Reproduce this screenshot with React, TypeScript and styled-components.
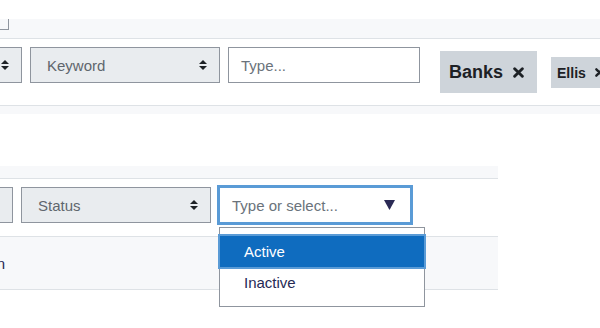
import styled, { createGlobalStyle } from 'styled-components';

const GlobalStyle = createGlobalStyle`
  body {
    margin: 0;
    background: #ffffff;
    font-family: 'Liberation Sans', Arial, sans-serif;
    overflow: hidden;
  }
`;

const Viewport = styled.div`
  width: 600px;
  height: 328px;
  overflow: hidden;
`;

// the page is scrolled sideways, so it starts left of the window
const Page = styled.div`
  margin-left: -120px;
  width: 720px;
  padding-top: 19px;
`;

const Panel = styled.section<{ $width: number }>`
  width: ${(p) => p.$width}px;
`;

const PanelHead = styled.div<{ $height: number }>`
  height: ${(p) => p.$height}px;
  background: #f7f8fa;
  border-bottom: 1px solid #dee2e6;
  position: relative;
`;

const CornerBox = styled.div`
  width: 128px;
  height: 10px;
  border-right: 1px solid #8f959e;
  border-bottom: 1px solid #8f959e;
`;

const FilterRow = styled.div<{ $height: number; $indent: number }>`
  display: flex;
  align-items: flex-start;
  gap: 8px;
  height: ${(p) => p.$height}px;
  padding: 8px 0 0 ${(p) => p.$indent}px;
  border-bottom: 1px solid #dee2e6;
`;

const Band = styled.div`
  height: 8px;
  background: #f7f8fa;
`;

const Gap = styled.div`
  height: 52px;
`;

const Select = styled.div<{ $width: number }>`
  box-sizing: border-box;
  width: ${(p) => p.$width}px;
  height: 36px;
  flex-shrink: 0;
  display: flex;
  align-items: center;
  justify-content: space-between;
  padding: 0 12px 0 16px;
  background: #e9ecef;
  border: 1px solid #8f959e;
  color: #5f666d;
  font-size: 15px;
`;

const TextInput = styled.div`
  box-sizing: border-box;
  width: 192px;
  height: 36px;
  flex-shrink: 0;
  display: flex;
  align-items: center;
  padding-left: 12px;
  border: 1px solid #8f959e;
  color: #6a737b;
  font-size: 15px;
`;

const TagList = styled.div`
  display: flex;
  align-items: flex-start;
  gap: 14px;
  margin-left: 12px;
`;

const Tag = styled.div<{ $big?: boolean }>`
  display: flex;
  align-items: center;
  flex-shrink: 0;
  gap: ${(p) => (p.$big ? 10 : 9)}px;
  height: ${(p) => (p.$big ? 42 : 31)}px;
  margin-top: ${(p) => (p.$big ? 4 : 10)}px;
  padding: ${(p) => (p.$big ? '0 13px 0 9px' : '0 8px 0 6px')};
  background: #ced4da;
  color: #1d2125;
  font-weight: 700;
  font-size: ${(p) => (p.$big ? 18 : 14)}px;
`;

const ComboWrap = styled.div`
  position: relative;
  flex-shrink: 0;
`;

const Combo = styled.div`
  box-sizing: border-box;
  width: 192px;
  height: 36px;
  display: flex;
  align-items: center;
  justify-content: space-between;
  padding: 0 15px 0 12px;
  background: #ffffff;
  border: 1px solid #5a9bd6;
  box-shadow: 0 0 0 2px #5a9bd6;
  color: #6a737b;
  font-size: 15px;
`;

const Listbox = styled.ul`
  position: absolute;
  top: 40px;
  left: 0;
  z-index: 2;
  box-sizing: border-box;
  width: 206px;
  margin: 0;
  padding: 8px 0;
  list-style: none;
  background: #ffffff;
  border: 1px solid #8f959e;
`;

const Option = styled.li<{ $active?: boolean }>`
  position: relative;
  height: 31px;
  line-height: 31px;
  padding-left: 24px;
  font-size: 15px;
  color: ${(p) => (p.$active ? '#ffffff' : '#262a55')};
  background: ${(p) => (p.$active ? '#0f6cbf' : 'transparent')};
  box-shadow: ${(p) => (p.$active ? '0 0 0 2px #5a9bd6' : 'none')};
`;

const DataRow = styled.div`
  height: 52px;
  display: flex;
  align-items: center;
  padding-left: 75px;
  background: #f7f8fa;
  border-bottom: 1px solid #dee2e6;
  color: #262a55;
  font-size: 15px;
`;

const SortIcon = () => (
  <svg width="8" height="10" viewBox="0 0 8 10">
    <polygon points="0,4 4,0 8,4" fill="#1d2125" />
    <polygon points="0,6 4,10 8,6" fill="#1d2125" />
  </svg>
);

const TimesIcon = ({ size }: { size: number }) => (
  <svg width={size} height={size} viewBox="0 0 10 10">
    <path d="M1.5 1.5 L8.5 8.5 M8.5 1.5 L1.5 8.5" stroke="#1d2125" strokeWidth="2.6" strokeLinecap="round" />
  </svg>
);

const CaretIcon = () => (
  <svg width="11" height="10" viewBox="0 0 11 10">
    <polygon points="0,0 11,0 5.5,10" fill="#2b2a55" />
  </svg>
);

export default function App() {
  return (
    <Viewport>
      <GlobalStyle />
      <Page>
        <Panel $width={720}>
          <PanelHead $height={19}>
            <CornerBox />
          </PanelHead>
          <FilterRow $height={58} $indent={42}>
            <Select $width={100}>
              <span />
              <SortIcon />
            </Select>
            <Select $width={190}>
              <span>Keyword</span>
              <SortIcon />
            </Select>
            <TextInput>Type...</TextInput>
            <TagList>
              <Tag $big>
                Banks
                <TimesIcon size={11} />
              </Tag>
              <Tag>
                Ellis
                <TimesIcon size={9} />
              </Tag>
            </TagList>
          </FilterRow>
          <Band />
        </Panel>
        <Gap />
        <Panel $width={618}>
          <PanelHead $height={12} />
          <FilterRow $height={49} $indent={33}>
            <Select $width={100}>
              <span />
              <SortIcon />
            </Select>
            <Select $width={190}>
              <span>Status</span>
              <SortIcon />
            </Select>
            <ComboWrap>
              <Combo>
                <span>Type or select...</span>
                <CaretIcon />
              </Combo>
              <Listbox>
                <Option $active>Active</Option>
                <Option>Inactive</Option>
              </Listbox>
            </ComboWrap>
          </FilterRow>
          <DataRow>Section</DataRow>
        </Panel>
      </Page>
    </Viewport>
  );
}
